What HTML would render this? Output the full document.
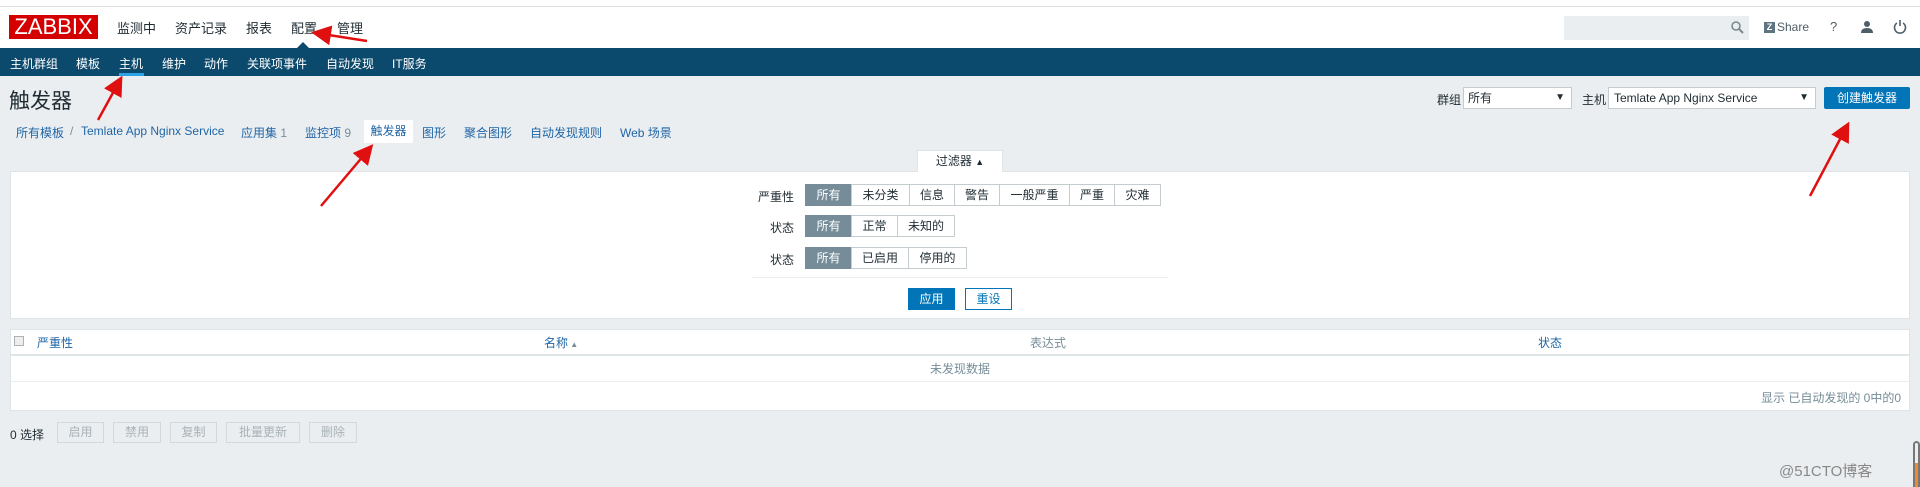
<!DOCTYPE html>
<html><head><meta charset="utf-8"><style>
*{margin:0;padding:0;box-sizing:border-box}
body{width:1920px;height:487px;background:#ebeef0;font-family:"Liberation Sans","Noto Sans CJK SC",sans-serif;font-size:12px;color:#1f2c33;position:relative;overflow:hidden}
.a{position:absolute;white-space:nowrap}
.lnk{color:#1f65a6}
.btn{position:absolute;height:22px;line-height:20px;text-align:center;border:1px solid #c5ccd0;background:#fff;color:#1f2c33;font-size:12px}
.sel{background:#768d99;color:#fff;border-color:#768d99}
.dis{position:absolute;top:422px;height:21px;line-height:19px;text-align:center;border:1px solid #d3d8db;background:#ebeef0;color:#a8b2b8;font-size:12px}
.tm{font-size:13px;top:18px}
</style></head><body>
<div class="a" style="left:0;top:5px;width:1920px;height:43px;background:#fff;border-top:2px solid #dcdfe1"></div>
<div class="a" style="left:0;top:0;width:1920px;height:6px;background:#fff"></div>
<div class="a" style="left:9px;top:15px;width:89px;height:24px;background:#d40000;color:#fff;font-size:22px;line-height:24px;text-align:center">ZABBIX</div>
<div class="a tm" style="left:117px">监测中</div>
<div class="a tm" style="left:175px">资产记录</div>
<div class="a tm" style="left:246px">报表</div>
<div class="a tm" style="left:291px">配置</div>
<div class="a tm" style="left:337px">管理</div>
<div class="a" style="left:296px;top:42px;width:0;height:0;border-left:7px solid transparent;border-right:7px solid transparent;border-bottom:7px solid #0c4a6d"></div>
<div class="a" style="left:1564px;top:16px;width:185px;height:24px;background:#ebeef0"></div>
<svg class="a" style="left:1730px;top:20px" width="14" height="14"><circle cx="6" cy="6" r="4" fill="none" stroke="#7b8a92" stroke-width="1.6"/><line x1="9" y1="9" x2="13" y2="13" stroke="#7b8a92" stroke-width="2"/></svg>
<div class="a" style="left:1764px;top:22px;width:11px;height:11px;background:#5d7483;color:#fff;font-size:9px;line-height:11px;text-align:center;font-weight:bold">Z</div>
<div class="a" style="left:1777px;top:20px;font-size:12px;color:#4f5f68">Share</div>
<div class="a" style="left:1830px;top:19px;font-size:13px;color:#4f5f68">?</div>
<svg class="a" style="left:1860px;top:20px" width="14" height="14"><circle cx="7" cy="4" r="3" fill="#4f5f68"/><path d="M1 13 Q1 8 7 8 Q13 8 13 13Z" fill="#4f5f68"/></svg>
<svg class="a" style="left:1893px;top:19px" width="14" height="15"><path d="M4 4 A5.5 5.5 0 1 0 10 4" fill="none" stroke="#4f5f68" stroke-width="1.6"/><line x1="7" y1="1" x2="7" y2="7" stroke="#4f5f68" stroke-width="1.6"/></svg>
<div class="a" style="left:0;top:48px;width:1920px;height:28px;background:#0c4a6d"></div>
<div class="a" style="left:10px;top:55px;color:#fff">主机群组</div>
<div class="a" style="left:76px;top:55px;color:#fff">模板</div>
<div class="a" style="left:119px;top:55px;color:#fff">主机</div>
<div class="a" style="left:119px;top:73px;width:25px;height:3px;background:#2ba3e6"></div>
<div class="a" style="left:162px;top:55px;color:#fff">维护</div>
<div class="a" style="left:204px;top:55px;color:#fff">动作</div>
<div class="a" style="left:247px;top:55px;color:#fff">关联项事件</div>
<div class="a" style="left:326px;top:55px;color:#fff">自动发现</div>
<div class="a" style="left:392px;top:55px;color:#fff">IT服务</div>
<div class="a" style="left:9px;top:85px;font-size:21px">触发器</div>
<div class="a" style="left:1437px;top:91px">群组</div>
<div class="a" style="left:1463px;top:87px;width:109px;height:22px;background:#fff;border:1px solid #c5ccd0;padding-left:4px;line-height:20px">所有<span style="position:absolute;right:6px;font-size:10px">▼</span></div>
<div class="a" style="left:1582px;top:91px">主机</div>
<div class="a" style="left:1608px;top:87px;width:208px;height:22px;background:#fff;border:1px solid #c5ccd0;padding-left:5px;line-height:20px">Temlate App Nginx Service<span style="position:absolute;right:6px;font-size:10px">▼</span></div>
<div class="a" style="left:1824px;top:87px;width:86px;height:22px;background:#0275b8;color:#fff;text-align:center;line-height:22px;border-radius:2px">创建触发器</div>
<div class="a lnk" style="left:16px;top:124px">所有模板</div>
<div class="a" style="left:70px;top:124px;color:#768d99">/</div>
<div class="a lnk" style="left:81px;top:124px">Temlate App Nginx Service</div>
<div class="a lnk" style="left:241px;top:124px">应用集 <span style="color:#768d99">1</span></div>
<div class="a lnk" style="left:305px;top:124px">监控项 <span style="color:#768d99">9</span></div>
<div class="a" style="left:364px;top:120px;width:49px;height:23px;background:#fff;line-height:23px;text-align:center;color:#1f65a6">触发器</div>
<div class="a lnk" style="left:422px;top:124px">图形</div>
<div class="a lnk" style="left:464px;top:124px">聚合图形</div>
<div class="a lnk" style="left:530px;top:124px">自动发现规则</div>
<div class="a lnk" style="left:620px;top:124px">Web 场景</div>
<div class="a" style="left:917px;top:150px;width:86px;height:22px;background:#fff;text-align:center;line-height:21px;border:1px solid #dfe4e7;border-bottom:none">过滤器 <span style="font-size:9px">▲</span></div>
<div class="a" style="left:10px;top:171px;width:1900px;height:148px;background:#fff;border:1px solid #dfe4e7"></div>
<div class="a" style="left:918px;top:170px;width:84px;height:3px;background:#fff"></div>
<div class="a" style="left:758px;top:188px">严重性</div>
<div class="btn sel" style="left:805px;top:184px;width:47px">所有</div>
<div class="btn" style="left:851px;top:184px;width:59px">未分类</div>
<div class="btn" style="left:909px;top:184px;width:46px">信息</div>
<div class="btn" style="left:954px;top:184px;width:46px">警告</div>
<div class="btn" style="left:999px;top:184px;width:71px">一般严重</div>
<div class="btn" style="left:1069px;top:184px;width:46px">严重</div>
<div class="btn" style="left:1114px;top:184px;width:47px">灾难</div>
<div class="a" style="left:770px;top:219px">状态</div>
<div class="btn sel" style="left:805px;top:215px;width:47px">所有</div>
<div class="btn" style="left:851px;top:215px;width:47px">正常</div>
<div class="btn" style="left:897px;top:215px;width:58px">未知的</div>
<div class="a" style="left:770px;top:251px">状态</div>
<div class="btn sel" style="left:805px;top:247px;width:47px">所有</div>
<div class="btn" style="left:851px;top:247px;width:58px">已启用</div>
<div class="btn" style="left:908px;top:247px;width:59px">停用的</div>
<div class="a" style="left:752px;top:277px;width:416px;height:1px;background:#ebeef0"></div>
<div class="a" style="left:908px;top:288px;width:47px;height:22px;background:#0275b8;color:#fff;text-align:center;line-height:22px">应用</div>
<div class="a" style="left:965px;top:288px;width:47px;height:22px;border:1px solid #0275b8;background:#fff;color:#0275b8;text-align:center;line-height:20px">重设</div>
<div class="a" style="left:10px;top:329px;width:1900px;height:82px;background:#fff;border:1px solid #dfe4e7"></div>
<div class="a" style="left:11px;top:354px;width:1898px;height:2px;background:#dfe4e7"></div>
<div class="a" style="left:11px;top:381px;width:1898px;height:1px;background:#ebeef0"></div>
<div class="a" style="left:14px;top:336px;width:10px;height:10px;border:1px solid #aab3b8;background:#eee"></div>
<div class="a lnk" style="left:37px;top:334px">严重性</div>
<div class="a lnk" style="left:544px;top:334px">名称<span style="font-size:8px;color:#768d99"> ▲</span></div>
<div class="a" style="left:1030px;top:334px;color:#768d99">表达式</div>
<div class="a lnk" style="left:1538px;top:334px">状态</div>
<div class="a" style="left:930px;top:360px;color:#768d99">未发现数据</div>
<div class="a" style="left:1761px;top:389px;color:#768d99">显示 已自动发现的 0中的0</div>
<div class="a" style="left:10px;top:426px">0 选择</div>
<div class="dis" style="left:57px;width:47px">启用</div>
<div class="dis" style="left:113px;width:48px">禁用</div>
<div class="dis" style="left:170px;width:47px">复制</div>
<div class="dis" style="left:226px;width:74px">批量更新</div>
<div class="dis" style="left:309px;width:48px">删除</div>
<div class="a" style="left:1779px;top:460px;font-size:15px;color:#888">@51CTO博客</div>
<div class="a" style="left:1913px;top:441px;width:7px;height:46px;border:2px solid #777;border-radius:4px 4px 0 0;border-bottom:none"></div>
<div class="a" style="left:1915px;top:463px;width:3px;height:24px;background:#f08a30"></div>
<svg class="a" style="left:0;top:0" width="1920" height="487">
<defs><marker id="h" markerWidth="8" markerHeight="8" refX="6" refY="4" orient="auto"><path d="M0 0 L8 4 L0 8Z" fill="#e01010"/></marker></defs>
<g stroke="#e01010" stroke-width="2.5" marker-end="url(#h)">
<line x1="367" y1="41" x2="316" y2="33"/>
<line x1="98" y1="120" x2="120" y2="80"/>
<line x1="321" y1="206" x2="370" y2="148"/>
<line x1="1810" y1="196" x2="1847" y2="126"/>
</g></svg>
</body></html>
